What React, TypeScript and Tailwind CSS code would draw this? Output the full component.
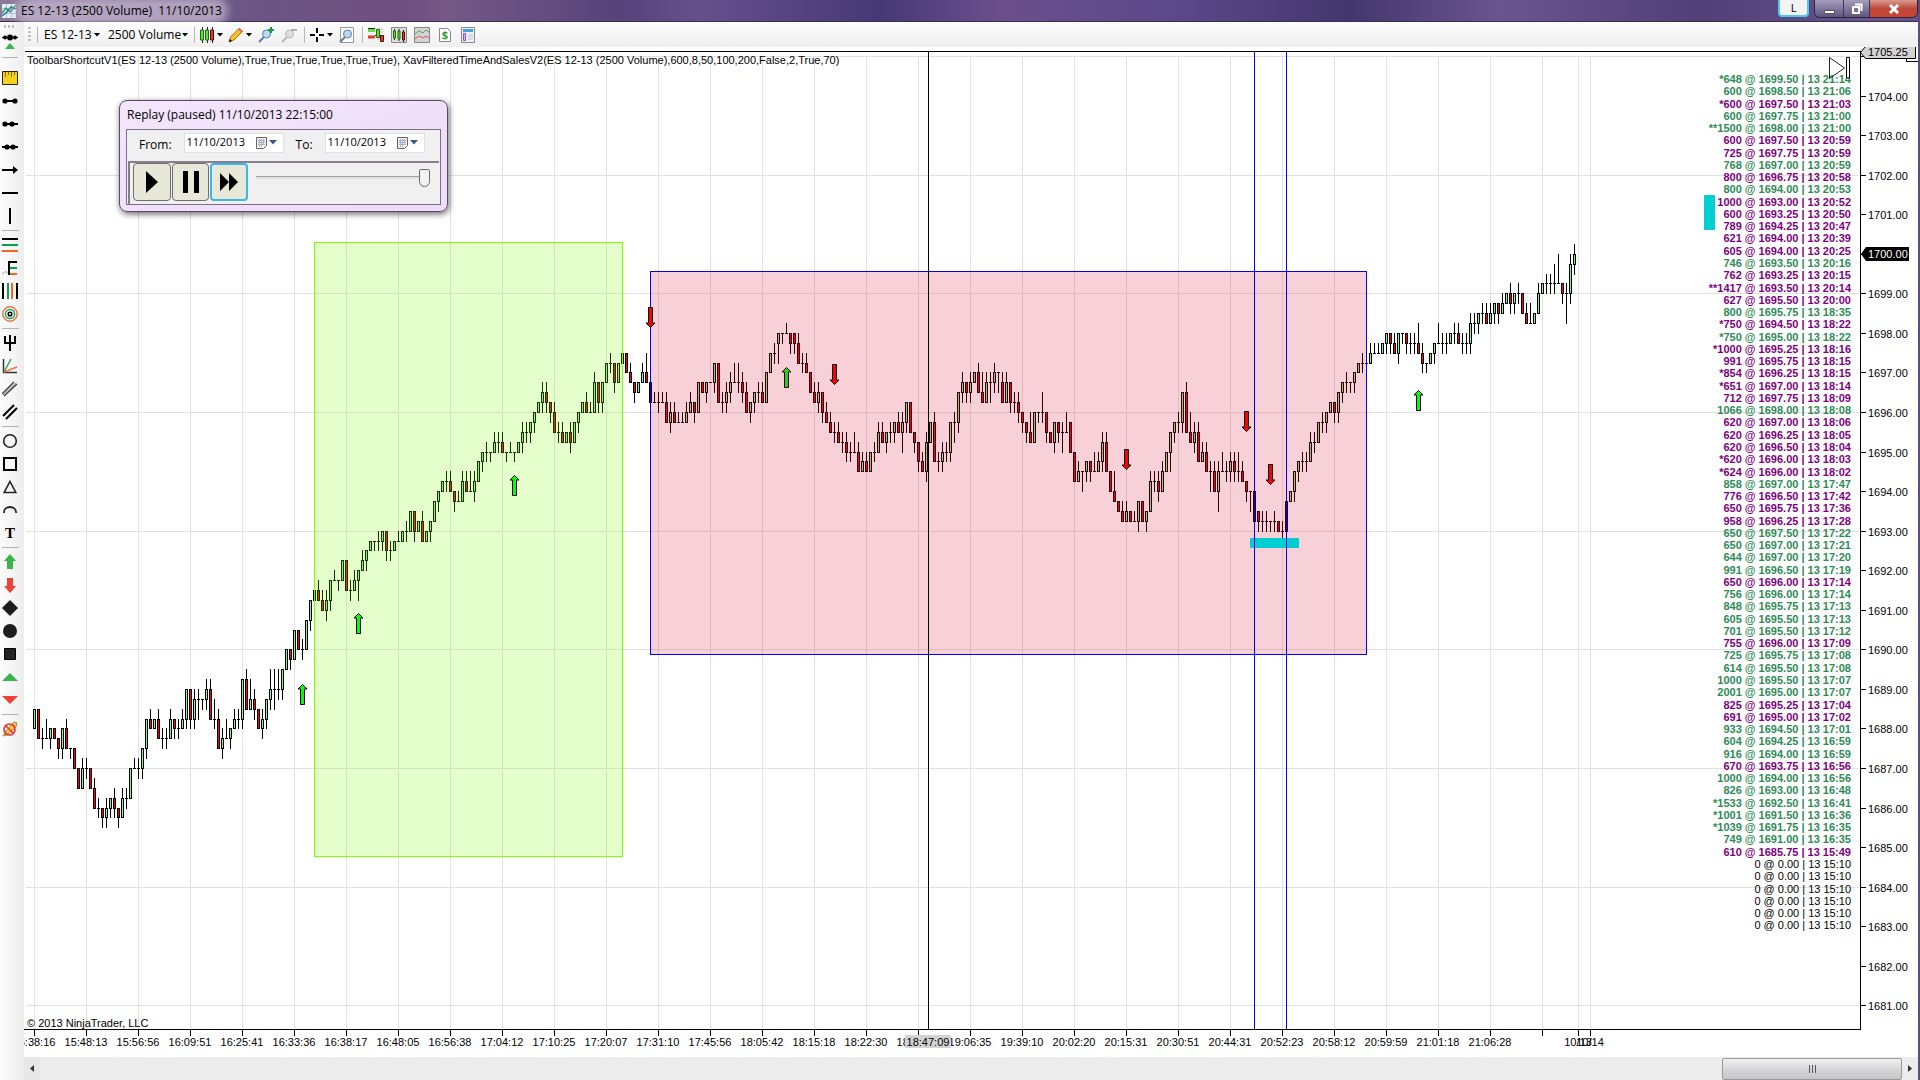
import React from "react";

// open, high, low, close in ticks (1 tick = 0.25) above 1680.00
const candles: number[][] = [
  [32,34,32,34],[34,34,31,31],[31,32,30,31],[31,33,31,31],[31,32,30,32],[32,32,31,31],[31,31,29,30],[30,32,29,32],[32,33,30,30],[30,30,29,30],
  [30,30,28,28],[28,28,26,26],[26,29,26,28],[28,29,27,28],[28,28,26,26],[26,27,24,24],[24,25,23,24],[24,24,22,23],[23,25,22,24],[24,25,23,25],
  [25,26,23,24],[24,24,22,23],[23,26,23,25],[25,26,24,25],[25,28,25,28],[28,29,28,28],[28,29,27,28],[28,30,27,30],[30,33,29,33],[33,34,32,32],
  [32,33,32,33],[33,34,31,31],[31,32,30,31],[31,32,30,31],[31,34,31,33],[33,33,31,32],[32,33,31,32],[32,34,32,33],[33,36,32,36],[36,36,32,33],
  [33,36,32,35],[35,36,33,35],[35,35,34,35],[35,37,34,36],[36,37,33,33],[33,35,32,33],[33,34,30,30],[30,32,29,31],[31,33,31,31],[31,32,30,32],
  [32,34,32,33],[33,34,32,33],[33,37,32,37],[37,38,34,34],[34,37,34,35],[35,36,33,34],[34,34,32,32],[32,34,31,33],[33,35,32,35],[35,38,34,36],
  [36,38,34,36],[36,38,35,36],[36,38,35,38],[38,40,38,40],[40,40,38,39],[39,42,39,42],[42,42,40,40],[40,41,39,40],[40,43,40,43],[43,45,42,45],
  [45,46,45,46],[46,47,45,45],[45,46,44,44],[44,46,43,45],[45,47,44,47],[47,48,47,47],[47,47,46,47],[47,49,47,49],[49,49,46,46],[46,47,45,46],
  [46,48,46,47],[47,48,45,48],[48,50,48,49],[49,50,48,50],[50,51,50,51],[51,51,50,51],[51,52,50,51],[51,52,50,52],[52,52,49,50],[50,51,49,50],
  [50,51,50,51],[51,52,51,51],[51,52,51,52],[52,53,51,52],[52,54,52,54],[54,54,51,52],[52,53,52,53],[53,54,51,51],[51,52,51,52],[52,53,51,53],
  [53,55,53,55],[55,56,54,56],[56,57,56,57],[57,58,56,57],[57,58,56,56],[56,56,54,55],[55,56,55,55],[55,58,55,57],[57,58,56,56],[56,58,56,56],
  [56,58,55,57],[57,59,57,59],[59,60,58,60],[60,61,59,60],[60,60,59,60],[60,62,60,61],[61,62,60,61],[61,62,60,60],[60,60,59,60],[60,61,60,60],
  [60,60,59,60],[60,61,60,61],[61,63,60,62],[62,63,61,62],[62,63,61,63],[63,64,62,64],[64,65,64,65],[65,67,64,66],[66,67,64,65],[65,65,63,64],
  [64,65,62,62],[62,63,61,62],[62,63,61,61],[61,62,61,62],[62,63,60,61],[61,63,61,63],[63,64,62,64],[64,65,64,65],[65,66,64,64],[64,65,64,64],
  [64,68,64,67],[67,67,64,65],[65,67,64,67],[67,69,67,69],[69,70,68,69],[69,69,66,67],[67,69,67,69],[69,71,68,70],[70,70,68,68],[68,69,67,67],
  [67,67,65,66],[66,67,66,67],[67,69,67,68],[68,70,67,67],[67,67,65,65],[65,66,65,65],[65,66,64,65],[65,66,65,65],[65,66,63,63],[63,65,62,64],
  [64,65,63,63],[63,64,63,63],[63,64,63,63],[63,65,63,64],[64,66,64,65],[65,65,63,64],[64,67,64,67],[67,67,66,66],[66,67,65,67],[67,67,67,67],
  [67,69,66,69],[69,69,65,65],[65,66,64,65],[65,67,64,66],[66,68,65,67],[67,69,67,67],[67,69,66,67],[67,68,65,66],[66,67,64,64],[64,65,63,65],
  [65,66,64,66],[66,67,65,66],[66,67,65,65],[65,68,65,68],[68,70,68,70],[70,71,69,70],[71,72,69,72],[72,72,71,72],[72,73,72,72],[72,72,70,71],
  [72,72,70,71],[71,72,69,69],[69,70,68,69],[69,70,68,68],[68,68,66,66],[66,67,65,65],[65,67,64,66],[66,66,63,64],[64,65,63,63],[63,64,62,62],
  [62,63,61,62],[62,63,61,61],[61,62,60,61],[61,62,59,60],[60,61,59,60],[60,62,60,60],[60,61,58,58],[58,60,58,59],[59,60,58,58],[58,60,58,60],
  [60,61,59,60],[60,63,60,62],[62,63,61,61],[61,62,60,62],[62,63,61,62],[62,63,61,63],[63,64,62,62],[62,64,60,63],[63,65,62,65],[65,65,62,62],
  [62,62,60,61],[61,61,58,59],[59,60,58,58],[58,62,57,61],[61,63,61,63],[63,64,59,59],[59,60,58,59],[59,61,58,60],[60,61,59,60],[60,63,59,63],
  [63,64,61,63],[63,66,62,66],[66,68,65,67],[67,67,65,66],[66,68,65,67],[67,68,67,68],[68,69,66,66],[66,68,65,65],[65,68,65,67],[67,68,65,67],
  [67,69,66,68],[68,68,66,68],[67,68,65,65],[65,68,65,67],[67,67,64,65],[65,66,64,65],[65,66,63,64],[64,64,62,63],[63,63,61,62],[62,64,61,61],
  [61,64,61,64],[64,64,63,64],[64,66,63,64],[64,64,61,62],[62,62,61,61],[61,63,60,63],[63,63,61,62],[62,63,60,62],[62,64,62,62],[63,63,60,60],
  [60,60,57,57],[57,59,57,58],[58,58,56,58],[58,59,57,59],[59,59,57,58],[58,60,58,58],[58,60,58,59],[59,62,58,61],[61,62,58,58],[58,58,56,56],
  [56,58,55,55],[55,55,54,54],[54,55,53,53],[53,55,53,54],[54,54,53,53],[53,54,53,53],[53,55,52,55],[55,55,53,53],[53,54,52,54],[54,58,54,57],
  [57,58,56,57],[57,58,55,56],[56,59,56,58],[58,60,58,60],[60,62,58,62],[62,63,61,63],[63,64,62,63],[63,66,62,66],[66,67,62,62],[62,64,61,61],
  [61,63,60,62],[62,63,59,59],[59,61,59,60],[60,61,58,58],[58,59,56,58],[58,59,56,56],[56,59,54,58],[58,60,58,58],[58,59,57,58],[58,60,57,59],
  [59,60,57,58],[58,60,57,58],[58,59,57,57],[57,57,55,56],[56,56,54,56],[56,56,53,53],[54,54,52,53],[53,54,52,53],[53,54,52,53],[53,53,52,53],
  [53,54,52,53],[53,53,52,52],[52,53,51,52],[52,55,52,55],[55,56,55,56],[56,58,55,58],[58,59,57,59],[59,60,58,59],[59,60,58,59],[59,62,59,61],
  [61,62,60,61],[61,63,61,63],[63,64,62,63],[63,64,62,64],[64,65,64,65],[65,65,63,64],[64,66,63,66],[66,67,65,67],[67,68,66,67],[67,67,66,67],
  [67,68,66,68],[68,69,68,69],[69,70,68,69],[69,69,69,69],[69,71,69,70],[70,71,70,70],[70,71,70,70],[70,71,70,71],[71,72,70,72],[72,72,70,71],
  [71,72,70,70],[70,72,69,72],[72,72,71,72],[72,72,70,71],[71,72,70,71],[71,72,70,71],[71,73,70,70],[70,71,68,69],[69,69,68,69],[69,70,69,70],
  [70,71,69,71],[71,73,71,71],[71,72,70,71],[71,72,70,71],[71,72,71,72],[72,73,71,72],[72,73,71,71],[71,72,70,71],[71,72,70,71],[71,74,70,73],
  [73,74,72,73],[73,74,72,74],[74,75,73,74],[74,75,73,73],[73,75,73,74],[74,75,73,75],[75,75,73,74],[74,76,74,75],[75,76,75,76],[76,77,74,75],
  [75,76,74,76],[76,77,75,76],[76,76,74,74],[74,75,73,73],[73,75,73,73],[73,74,73,74],[74,77,74,76],[76,77,76,77],[77,78,76,77],[77,78,76,77],
  [77,79,76,77],[77,80,77,77],[77,77,75,76],[76,77,73,76],[76,80,75,79],[79,81,78,80],
];

const timeLabels = [
  "15:38:16", "15:48:13", "15:56:56", "16:09:51", "16:25:41", "16:33:36", "16:38:17", "16:48:05", "16:56:38", "17:04:12",
  "17:10:25", "17:20:07", "17:31:10", "17:45:56", "18:05:42", "18:15:18", "18:22:30", "18:36:42", "19:06:35", "19:39:10",
  "20:02:20", "20:15:31", "20:30:51", "20:44:31", "20:52:23", "20:58:12", "20:59:59", "21:01:18", "21:06:28", "",
];

// b = traded at the ask (green), s = traded at the bid (purple), n = empty row
const trades = `b*648 @ 1699.50 | 13 21:14
b600 @ 1698.50 | 13 21:06
s*600 @ 1697.50 | 13 21:03
b600 @ 1697.75 | 13 21:00
b**1500 @ 1698.00 | 13 21:00
s600 @ 1697.50 | 13 20:59
s725 @ 1697.75 | 13 20:59
b768 @ 1697.00 | 13 20:59
s800 @ 1696.75 | 13 20:58
b800 @ 1694.00 | 13 20:53
s1000 @ 1693.00 | 13 20:52
s600 @ 1693.25 | 13 20:50
s789 @ 1694.25 | 13 20:47
s621 @ 1694.00 | 13 20:39
s605 @ 1694.00 | 13 20:25
b746 @ 1693.50 | 13 20:16
s762 @ 1693.25 | 13 20:15
s**1417 @ 1693.50 | 13 20:14
s627 @ 1695.50 | 13 20:00
b800 @ 1695.75 | 13 18:35
s*750 @ 1694.50 | 13 18:22
b*750 @ 1695.00 | 13 18:22
s*1000 @ 1695.25 | 13 18:16
s991 @ 1695.75 | 13 18:15
s*854 @ 1696.25 | 13 18:15
s*651 @ 1697.00 | 13 18:14
s712 @ 1697.75 | 13 18:09
b1066 @ 1698.00 | 13 18:08
s620 @ 1697.00 | 13 18:06
s620 @ 1696.25 | 13 18:05
s620 @ 1696.50 | 13 18:04
s*620 @ 1696.00 | 13 18:03
s*624 @ 1696.00 | 13 18:02
b858 @ 1697.00 | 13 17:47
s776 @ 1696.50 | 13 17:42
s650 @ 1695.75 | 13 17:36
s958 @ 1696.25 | 13 17:28
b650 @ 1697.50 | 13 17:22
b650 @ 1697.00 | 13 17:21
b644 @ 1697.00 | 13 17:20
b991 @ 1696.50 | 13 17:19
s650 @ 1696.00 | 13 17:14
b756 @ 1696.00 | 13 17:14
b848 @ 1695.75 | 13 17:13
b605 @ 1695.50 | 13 17:13
b701 @ 1695.50 | 13 17:12
s755 @ 1696.00 | 13 17:09
b725 @ 1695.75 | 13 17:08
b614 @ 1695.50 | 13 17:08
b1000 @ 1695.50 | 13 17:07
b2001 @ 1695.00 | 13 17:07
s825 @ 1695.25 | 13 17:04
s691 @ 1695.00 | 13 17:02
b933 @ 1694.50 | 13 17:01
b604 @ 1694.25 | 13 16:59
b916 @ 1694.00 | 13 16:59
s670 @ 1693.75 | 13 16:56
b1000 @ 1694.00 | 13 16:56
b826 @ 1693.00 | 13 16:48
b*1533 @ 1692.50 | 13 16:41
b*1001 @ 1691.50 | 13 16:36
b*1039 @ 1691.75 | 13 16:35
b749 @ 1691.00 | 13 16:35
s610 @ 1685.75 | 13 15:49
n0 @ 0.00 | 13 15:10
n0 @ 0.00 | 13 15:10
n0 @ 0.00 | 13 15:10
n0 @ 0.00 | 13 15:10
n0 @ 0.00 | 13 15:10
n0 @ 0.00 | 13 15:10`.split("\n");

const tradeStyles: Record<string, string> = {
  b: "font-bold text-[#2e8b57]",
  s: "font-bold text-[#800080]",
  n: "text-black",
};

const barX = (i: number) => 10 + i * 4;
const tickY = (t: number) => Math.round(365 - (t - 64) * 9.89);

const Candle = ({ i, bar }: { i: number; bar: number[] }) => {
  const [open, high, low, close] = bar;
  const x = barX(i);
  const top = tickY(Math.max(open, close));
  const bottom = tickY(Math.min(open, close));
  return (
    <g>
      <rect x={x} y={tickY(high)} width={1} height={tickY(low) - tickY(high) + 1} />
      <rect x={x - 1} y={top} width={3} height={bottom - top + 1} />
      {open !== close && (
        <rect x={x} y={top + 1} width={1} height={bottom - top - 1} fill={close > open ? "#90ee90" : "#ff0000"} />
      )}
    </g>
  );
};

const Arrow = ({ x, y, up = false }: { x: number; y: number; up?: boolean }) => (
  <path
    transform={`translate(${x} ${y})`}
    d={up ? "M.5 .5l4.5 4.5h-2.5v15.5h-4v-15.5h-2.5z" : "M.5 20.5l4.5-4.5h-2.5v-15.5h-4v15.5h-2.5z"}
    fill={up ? "#00ff00" : "#ff0000"}
    stroke="#000"
  />
);

const Plot = () => (
  <svg className="block h-full w-full" role="img" aria-label="ES 12-13 price chart">
    <g fill="#e1e1e1" shapeRendering="crispEdges">
      {timeLabels.map((_, i) => (
        <rect key={i} x={10 + i * 52} y={8} width={1} height="100%" />
      ))}
      <rect x={1554} y={8} width={1} height="100%" />
      <rect x={1566} y={8} width={1} height="100%" />
      {[100, 88, 76, 64, 52, 40, 28, 16, 4].map((t) => (
        <rect key={t} x={2} y={tickY(t)} width="100%" height={1} />
      ))}
    </g>
    <g shapeRendering="crispEdges">
      {candles.map((bar, i) => (
        <Candle key={i} i={i} bar={bar} />
      ))}
    </g>
    <Arrow up x={762} y={320} />

    {/* marked regions */}
    <rect x={290.5} y={195.5} width={308} height={614} fill="#7fff00" fillOpacity={0.2} stroke="#7fff00" />
    <rect x={626.5} y={224.5} width={716} height={383} fill="#dc143c" fillOpacity={0.2} stroke="#0000ff" />
    <rect x={1226} y={491} width={49} height={10} rx={1} fill="#00ced1" />
    <rect x={1680} y={148} width={11} height={35} rx={1} fill="#00ced1" />

    <Arrow up x={278} y={637} />
    <Arrow up x={334} y={566} />
    <Arrow up x={490} y={428} />
    <Arrow up x={1394} y={343} />
    <Arrow x={626} y={260} />
    <Arrow x={810} y={317} />
    <Arrow x={1102} y={402} />
    <Arrow x={1222} y={364} />
    <Arrow x={1246} y={417} />

    <g shapeRendering="crispEdges">
      <rect x={1230} y={4} width={1} height="100%" fill="#0000ff" />
      <rect x={1262} y={4} width={1} height="100%" fill="#0000ff" />
      <rect x={904} y={4} width={1} height="100%" />
      <rect x={1} y={4} width="100%" height={1} />
    </g>
  </svg>
);

const PriceAxis = () => (
  <svg className="block h-full w-full text-[11px]">
    <rect x={0} y={4} width={1} height="100%" />
    {Array.from({ length: 24 }, (_, k) => 1704 - k).map((price) => {
      const y = tickY((price - 1680) * 4);
      return (
        <g key={price}>
          <rect x={0} y={y} width={6} height={1} />
          {price !== 1700 && (
            <text x={8} y={y + 5}>
              {price}.00
            </text>
          )}
        </g>
      );
    })}
    <rect x={0} y={9} width={6} height={1} />
    <path d="M46.500 14v-2M46 14.500h12" stroke="#000" />
    <path d="M.5 5.500l5-6h50v12h-50z" fill="#d3d3d3" stroke="#000" />
    <text x={8} y={9}>1705.25</text>
    <path d="M1 207l5-7h43v14h-43z" />
    <text x={8} y={211} fill="#fff">1700.00</text>
  </svg>
);

const Line = ({ d, color = "#000", w = 2 }: { d: string; color?: string; w?: number }) => (
  <path d={d} fill="none" stroke={color} strokeWidth={w} />
);

const drawingTools: ([string, React.ReactNode] | null)[] = [
  ["Ruler", <><path d="M.5 1.500h15v13h-15z" fill="#f2d21b" stroke="#2b2600" /><path d="M3.500 2v5M6.500 2v3M9.500 2v5M12.500 2v3" stroke="#8a6d00" /></>],
  ["Line", <><Line d="M2 8h12" /><circle cx="3" cy="8" r="2.600" /><circle cx="13" cy="8" r="2.600" /></>],
  ["Ray", <><Line d="M2 8h14" /><circle cx="3" cy="8" r="2.600" /><circle cx="10" cy="8" r="2.600" /></>],
  ["Extended line", <><Line d="M0 8h16" /><circle cx="5" cy="8" r="2.600" /><circle cx="11" cy="8" r="2.600" /></>],
  ["Arrow line", <><Line d="M0 8h14" /><path d="M11 4l5 4-5 4z" /></>],
  ["Horizontal line", <Line d="M0 8h16" />],
  ["Vertical line", <Line d="M8 0v16" />],
  null,
  ["Fibonacci retracements", <><Line d="M0 2h16" /><Line d="M0 8h16" color="#00a651" /><Line d="M0 14h16" color="#f26522" /></>],
  ["Fibonacci extensions", <><Line d="M15 2H7v13" /><Line d="M8 8h7" color="#00a651" /><Line d="M8 14h7" color="#f26522" /><path d="M.5 14l3-3 2.500 3" fill="none" stroke="#555" strokeDasharray="1 1" /></>],
  ["Fibonacci time", <><Line d="M1 0v16" /><Line d="M6 0v16" color="#00a651" /><Line d="M10 0v16" color="#f26522" /><Line d="M15 0v16" /></>],
  ["Fibonacci circle", <g fill="none" strokeWidth="1.500"><circle cx="8" cy="8" r="7.200" stroke="#ee7444" /><circle cx="8" cy="8" r="4.600" stroke="#22a85e" /><circle cx="8" cy="8" r="1.800" stroke="#000" /></g>],
  null,
  ["Pitchfork", <Line d="M3 1v7h10V1M8 0v16" />],
  ["Gann fan", <><Line d="M1.500 1v13.500H15" w={1.5} color="#333" /><Line d="M2 14L9 1" w={1.5} color="#22a85e" /><Line d="M2 14l13-5" w={1.5} color="#ee7444" /></>],
  ["Regression channel", <><Line d="M0 13L12 1M2 15L15 3" w={1.5} color="#444" /><Line d="M1 14L14 2" w={1} color="#999" /></>],
  ["Trend channel", <Line d="M1 12L12 1M4 15L15 4" />],
  null,
  ["Ellipse", <circle cx="8" cy="8" r="6.300" fill="none" stroke="#222" strokeWidth="1.600" />],
  ["Rectangle", <path d="M2 2h12v12H2z" fill="none" stroke="#000" strokeWidth="2" />],
  ["Triangle", <path d="M8 2.500L13.800 13.500H2.200z" fill="none" stroke="#222" strokeWidth="1.600" />],
  ["Arc", <path d="M1.800 11C2 3 14 3 14.200 11" fill="none" stroke="#222" strokeWidth="1.800" />],
  ["Text", <text x="8" y="13" textAnchor="middle" fontSize="15" className="font-['Liberation_Serif',serif] font-bold">T</text>],
  null,
  ["Arrow up", <path d="M8 0l6 7h-3v8H5V7H2z" fill="#39b54a" />],
  ["Arrow down", <path d="M8 16l6-7h-3V1H5v8H2z" fill="#ef4136" />],
  ["Diamond", <path d="M8 0l8 8-8 8-8-8z" fill="#1c1c1c" />],
  ["Dot", <circle cx="8" cy="8" r="7" fill="#1c1c1c" />],
  ["Square", <path d="M2.500 2.500h11v11h-11z" fill="#222" stroke="#000" />],
  ["Triangle up", <path d="M8 4l8 8H0z" fill="#39b54a" />],
  ["Triangle down", <path d="M8 12l8-8H0z" fill="#ef4136" />],
  null,
  ["Remove drawings", <><path d="M1 15l3-5 8-9 3 1-1 4-9 8z" fill="#f6c83c" stroke="#9a8a6a" /><circle cx="7.500" cy="8.500" r="5.500" fill="none" stroke="#e8332a" strokeWidth="1.600" /><path d="M4 5l7 7" stroke="#e8332a" strokeWidth="1.600" /></>],
];

const DrawingToolbar = () => (
  <aside className="flex w-6 shrink-0 flex-col bg-linear-to-r from-[#fdfdfd] to-[#ededed]">
    <div className="flex h-11 w-5 flex-col items-center">
      <svg width="16" height="36" viewBox="0 0 16 36">
        <path d="M2 4.500h12" stroke="#aaa" strokeWidth="2" strokeDasharray="2 2" />
        <path d="M0 15.500h16" stroke="#000" />
        <circle cx="3" cy="15.500" r="2" />
        <circle cx="8" cy="15.500" r="3" />
        <circle cx="13" cy="15.500" r="2" />
        <path d="M8 21l5 6H3z" fill="#39b54a" />
        <path d="M0 35.500h16" stroke="#b5b5b5" />
      </svg>
    </div>
    {drawingTools.map((tool, i) =>
      tool ? (
        <button key={i} aria-label={tool[0]} className="flex h-[23px] w-5 items-center justify-center">
          <svg width="16" height="16" viewBox="0 0 16 16">{tool[1]}</svg>
        </button>
      ) : (
        <div key={i} className="flex h-1.5 items-center pl-0.5">
          <div className="h-px w-[17px] bg-[#b5b5b5]" />
        </div>
      )
    )}
  </aside>
);

const Caret = () => (
  <svg width="6" height="4" viewBox="0 0 6 4" className="shrink-0">
    <path d="M0 0h6L3 3.500z" />
  </svg>
);

const Separator = () => <div className="mr-px ml-1 h-4 w-px bg-[#b8b8b8]" />;

const ToolButton = ({ label, menu = false, children }: { label: string; menu?: boolean; children: React.ReactNode }) => (
  <button
    aria-label={label}
    className={menu ? "flex h-5 w-[29px] items-center gap-0.5 pl-[3px]" : "flex h-5 w-[23px] items-center justify-center"}
  >
    <svg width="16" height="16" viewBox="0 0 16 16" className="shrink-0">{children}</svg>
    {menu && <Caret />}
  </button>
);

const Lens = ({ color = "#5a7fa8", fill = "#bcd9f0" }: { color?: string; fill?: string }) => (
  <>
    <path d="M6 10l-5 5" stroke={color} strokeWidth="2" />
    <circle cx="8.500" cy="7" r="4" fill={fill} stroke={color} />
  </>
);

const ChartToolbar = () => (
  <div className="flex h-[25px] items-center bg-linear-to-b from-[#fdfdfd] to-[#efefef] pl-1 font-['Open_Sans','Noto_Sans',sans-serif] text-xs">
    <svg width="3" height="16" viewBox="0 0 3 16">
      <path d="M1.500 0v16" stroke="#aaa" strokeWidth="2" strokeDasharray="2 2" />
    </svg>
    <div className="mr-1.5 ml-1.5 h-4 w-px bg-[#b8b8b8]" />
    <label className="flex items-center">
      <select aria-label="Instrument" className="w-[50px] appearance-none">
        <option>ES 12-13</option>
      </select>
      <Caret />
    </label>
    <label className="ml-2 flex items-center">
      <select aria-label="Interval" className="w-[74px] appearance-none">
        <option>2500 Volume</option>
      </select>
      <Caret />
    </label>
    <div className="mr-px ml-1.5 h-4 w-px bg-[#b8b8b8]" />
    <ToolButton label="Chart style" menu>
      <path d="M3.500 0v16M8.500 0v16M13.500 0v16" stroke="#222" />
      <path d="M1.500 3h3v10h-3z" fill="#5fe03a" stroke="#1d6b0c" />
      <path d="M6.500 3h3v10h-3z" fill="#5fe03a" stroke="#1d6b0c" />
      <path d="M11.500 3h3v10h-3z" fill="#e23a2e" stroke="#5a0d08" />
    </ToolButton>
    <ToolButton label="Drawing tools" menu>
      <path d="M1 15l1.500-5L11 1.500l3.500 3L6 13z" fill="#f6c12a" stroke="#a5761a" />
      <path d="M10 2.500l1.500-1.500 3.500 3-1.500 1.800z" fill="#e4655a" />
      <path d="M1 15l1-3 2 2z" />
    </ToolButton>
    <ToolButton label="Zoom in">
      <Lens />
      <path d="M13 0v6M10 3h6" stroke="#14a03a" strokeWidth="2" />
    </ToolButton>
    <ToolButton label="Zoom out">
      <Lens color="#b9b9b9" fill="#dedede" />
      <path d="M10 3h6" stroke="#b0b0b0" strokeWidth="2" />
    </ToolButton>
    <Separator />
    <ToolButton label="Crosshair" menu>
      <path d="M8 1v5M8 10v5M1 8h5M10 8h5" stroke="#000" strokeWidth="2" />
    </ToolButton>
    <ToolButton label="Data box">
      <path d="M1.500 .5h13v15h-13z" fill="#fff" stroke="#999" />
      <Lens />
    </ToolButton>
    <Separator />
    <ToolButton label="Chart trader">
      <path d="M9 2h6M9 5h6M9 12h6" stroke="#bbb" />
      <path d="M0 1.500h7M7 8.500h7" stroke="#222" />
      <path d="M0 3.500h7" stroke="#5fe03a" strokeWidth="3" />
      <path d="M0 10h7" stroke="#e23a2e" strokeWidth="3" />
      <path d="M8.500 2.500h3v8h-3z" fill="#5fe03a" stroke="#1d6b0c" />
      <path d="M12.500 8.500h3v6h-3z" fill="#e23a2e" stroke="#5a0d08" />
    </ToolButton>
    <ToolButton label="Data series">
      <path d="M.5 .5h15v15H.5z" fill="#ddd" stroke="#888" />
      <path d="M3.500 2v11M8 2v12M12.500 3v12" stroke="#222" />
      <path d="M2.500 4h2v7h-2zM7 4h2v8H7z" fill="#5fe03a" stroke="#1d6b0c" />
      <path d="M11.500 5h2v8h-2z" fill="#e23a2e" stroke="#5a0d08" />
    </ToolButton>
    <ToolButton label="Indicators">
      <path d="M.5 .5h15v15H.5z" fill="#d4d4d4" stroke="#888" />
      <path d="M1 7l4-3 4 2 3-3 3 2" fill="none" stroke="#3fae62" />
      <path d="M1 12l4-3 4 2 3-2 3 2" fill="none" stroke="#d9534f" />
    </ToolButton>
    <ToolButton label="Strategies">
      <path d="M2.500 1.500h8l3 3v10h-11z" fill="#fff" stroke="#888" />
      <text x="8" y="12" textAnchor="middle" fontSize="11" fontWeight="bold" fill="#2f9a2f">$</text>
    </ToolButton>
    <ToolButton label="Properties">
      <path d="M1.500 .5h13v15h-13z" fill="#eef0f8" stroke="#888" />
      <path d="M3 3.500h10" stroke="#3ea2dc" strokeWidth="3" />
      <path d="M3.500 6.500h2v7h-2z" fill="#d7b8ff" stroke="#8a4df0" />
      <path d="M8 8h5M8 10h5M8 12h5" stroke="#c3c9dd" />
    </ToolButton>
  </div>
);

const DateField = ({ id, label }: { id: string; label: string }) => (
  <>
    <label htmlFor={id} className="pt-1">
      {label}
    </label>
    <div className="flex h-5 w-[100px] items-center border border-[#dde0e8] bg-white">
      <input id={id} defaultValue="11/10/2013" className="w-[71px] pl-0.5 text-[11px] outline-none" />
      <button aria-label={`Pick ${id} date`} className="flex items-center gap-0.5">
        <svg width="11" height="12" viewBox="0 0 11 12">
          <path d="M.5 .5h10v8l-3 3h-7z" fill="#f4f2f2" stroke="#6b6064" />
          <path d="M2 3.500h7M2 5.500h7M2 7.500h7M3.500 2v8M5.500 2v8M7.500 2v6" stroke="#a8b4c4" />
        </svg>
        <svg width="8" height="5" viewBox="0 0 8 5">
          <path d="M0 0h8L4 4.500z" fill="#3c5a80" />
        </svg>
      </button>
    </div>
  </>
);

const ReplayDialog = () => (
  <section className="absolute top-[53px] left-[95px] h-[112px] w-[329px] rounded-lg border border-[#5a4a66] bg-linear-to-br from-[#f3e6fb] to-[#eddcf9] px-1.5 font-['Open_Sans','Noto_Sans',sans-serif] text-xs shadow-[1px_2px_6px_rgba(0,0,0,0.6)]">
    <h2 className="h-7 pt-1.5 pl-px">Replay (paused) 11/10/2013 22:15:00</h2>
    <div className="border border-[#7a6f84] bg-[#f0f0f0]">
      <div className="flex h-[31px] items-center gap-3 pb-1.5 pl-3">
        <div className="flex items-center gap-3">
          <DateField id="from" label="From:" />
        </div>
        <div className="flex items-center gap-3">
          <DateField id="to" label="To:" />
        </div>
      </div>
      <div className="mx-px flex h-[43px] items-center gap-px border-t-2 border-l-2 border-[#85808a] pb-1 pl-[3px]">
        <button aria-label="Play" className="flex h-[38px] w-[38px] items-center justify-center rounded-sm border border-[#6f6f6f] bg-[#e7e8d8]">
          <svg width="14" height="24" viewBox="0 0 14 24"><path d="M1 1l12 11L1 23z" /></svg>
        </button>
        <button aria-label="Pause" className="flex h-[38px] w-[37px] items-center justify-center rounded-sm border border-[#6f6f6f] bg-[#e7e8d8]">
          <svg width="16" height="22" viewBox="0 0 16 22"><path d="M0 0h5v22H0zM11 0h5v22h-5z" /></svg>
        </button>
        <button aria-label="Fast forward" className="flex h-[38px] w-[38px] items-center justify-center rounded-sm border-2 border-[#3fb4e8] bg-[#e7e8d8]">
          <svg width="18" height="18" viewBox="0 0 18 18"><path d="M0 0l9 9-9 9zM9 0l9 9-9 9z" /></svg>
        </button>
        <input
          type="range"
          aria-label="Replay speed"
          defaultValue={100}
          className="mb-2 ml-[7px] h-5 w-[174px] appearance-none bg-transparent [&::-webkit-slider-runnable-track]:h-[3px] [&::-webkit-slider-runnable-track]:border-t [&::-webkit-slider-runnable-track]:border-[#a5a5a5] [&::-webkit-slider-runnable-track]:bg-[#e0e0e0] [&::-webkit-slider-thumb]:-mt-2 [&::-webkit-slider-thumb]:h-[18px] [&::-webkit-slider-thumb]:w-[11px] [&::-webkit-slider-thumb]:appearance-none [&::-webkit-slider-thumb]:rounded-t-[2px] [&::-webkit-slider-thumb]:rounded-b-[6px] [&::-webkit-slider-thumb]:border [&::-webkit-slider-thumb]:border-[#6a6a6a] [&::-webkit-slider-thumb]:bg-[#f3f3f3]"
        />
      </div>
    </div>
  </section>
);

const TimeAndSales = () => (
  <ol className="absolute top-[26px] right-[9px] flex h-[859px] flex-col justify-between text-right text-[11px] leading-3 whitespace-pre">
    {trades.map((row, i) => (
      <li key={i} className={tradeStyles[row[0]]}>
        {row.slice(1)}
      </li>
    ))}
  </ol>
);

const TimeAxis = () => (
  <svg className="block h-[27px] w-full text-[11px]" textAnchor="middle">
    {timeLabels.map((label, i) => (
      <g key={i}>
        <rect x={10 + i * 52} y={0} width={1} height={6} />
        <text x={10 + i * 52} y={16}>{label}</text>
      </g>
    ))}
    <rect x={1554} y={0} width={1} height={6} />
    <rect x={1566} y={0} width={1} height={6} />
    <text x={1554} y={16}>10/13</text>
    <text x={1566} y={16}>10/14</text>
    <rect x={881} y={5} width={46} height={13} fill="#d3d3d3" />
    <text x={904} y={16}>18:47:09</text>
  </svg>
);

const TitleBar = () => (
  <header className="flex h-[22px] items-center border-b border-[#3a2f4c] bg-[linear-gradient(90deg,#8b7b9b_0px,#6b5786_230px,#6f4f80_400px,#745886_450px,#56437a_620px,#65508c_700px,#463876_880px,#6b4f8c_1000px,#5a4888_1180px,#43366e_1350px,#6a5590_1500px,#503f78_1700px,#65548a_1860px)] pl-0.5 font-['Open_Sans','Noto_Sans',sans-serif] text-xs">
    <svg width="14" height="14" viewBox="0 0 14 14">
      <path d="M0 0h14v14H0z" fill="#e6eef5" />
      <path d="M0 4.500h14M0 9.500h14M4.500 0v14M9.500 0v14" stroke="#b4c6d4" />
      <path d="M0 9l4-5 4 4 6-7" fill="none" stroke="#2f9e4a" strokeWidth="1.500" />
      <path d="M0 12l5-4 4-5 5 2" fill="none" stroke="#2d6fb8" strokeWidth="1.500" />
    </svg>
    <h1 className="ml-[5px] rounded-full bg-[#c9bcd3]/70 whitespace-pre shadow-[0_0_8px_6px_rgba(201,188,211,0.7)]">
      ES 12-13 (2500 Volume)  11/10/2013
    </h1>
    <div className="ml-auto flex h-full items-start">
      <button className="h-[17px] w-[31px] rounded-b-sm border-2 border-t-0 border-[#4cc8ee] bg-[#f3f3f3] text-[11px] leading-3">L</button>
      <div className="ml-[5px] flex h-[18px] overflow-hidden rounded-b-md border border-t-0 border-[#2c2340]">
        <button aria-label="Minimize" className="flex w-7 items-center justify-center bg-linear-to-b from-[#a79ebb] to-[#5f5480]">
          <svg width="11" height="12" viewBox="0 0 11 12"><path d="M.5 7.500h10v3H.5z" fill="#fff" stroke="#555" /></svg>
        </button>
        <button aria-label="Restore" className="flex w-[27px] items-center justify-center border-x border-[#40355a] bg-linear-to-b from-[#a79ebb] to-[#5f5480]">
          <svg width="12" height="12" viewBox="0 0 12 12">
            <path d="M4 1.500h6.500V8" fill="none" stroke="#fff" strokeWidth="2" />
            <path d="M2 4h6v6H2z" fill="none" stroke="#fff" strokeWidth="2" />
          </svg>
        </button>
        <button aria-label="Close" className="flex w-[47px] items-center justify-center bg-linear-to-b from-[#d79a92] via-[#c0483a] to-[#c8452f]">
          <svg width="12" height="10" viewBox="0 0 12 10"><path d="M2 1l8 8M10 1L2 9" stroke="#fff" strokeWidth="3" /></svg>
        </button>
      </div>
    </div>
  </header>
);

const ScrollBar = () => (
  <div className="flex h-[23px] items-center bg-[#ececec]">
    <button aria-label="Scroll left" className="flex h-full w-4 items-center justify-center bg-[#e7e7e7]">
      <svg width="4" height="7" viewBox="0 0 4 7"><path d="M4 0v7L0 3.500z" fill="#333" /></svg>
    </button>
    <div className="ml-auto flex h-[22px] w-[180px] items-center justify-center gap-0.5 rounded-xs border border-[#9a9a9a] bg-linear-to-b from-[#f2f2f2] via-[#d8d8da] to-[#c6c6ca]">
      <div className="h-2 w-px bg-[#555]" />
      <div className="h-2 w-px bg-[#555]" />
      <div className="h-2 w-px bg-[#555]" />
    </div>
    <button aria-label="Scroll right" className="flex h-full w-4 items-center justify-center">
      <svg width="4" height="7" viewBox="0 0 4 7"><path d="M0 0v7l4-3.500z" fill="#333" /></svg>
    </button>
  </div>
);

const App: React.FC = () => {
  return (
    <div className="flex min-h-screen w-full flex-col border-r-2 border-[#5d4c7c] bg-white font-['Liberation_Sans',Arial,sans-serif] text-black">
      <TitleBar />
      <div className="flex flex-1">
        <DrawingToolbar />
        <main className="flex min-w-0 flex-1 flex-col">
          <ChartToolbar />
          <div className="flex min-h-[900px] flex-1">
            <div className="relative min-w-0 flex-1 overflow-hidden border-b border-black">
              <div className="absolute inset-0">
                <Plot />
              </div>
              <p className="absolute top-1.5 left-[3px] text-[11px] leading-[14px] whitespace-nowrap">
                ToolbarShortcutV1(ES 12-13 (2500 Volume),True,True,True,True,True,True), XavFilteredTimeAndSalesV2(ES 12-13 (2500 Volume),600,8,50,100,200,False,2,True,70)
              </p>
              <p className="absolute bottom-0 left-[3px] text-[11px] leading-3">© 2013 NinjaTrader, LLC</p>
              <TimeAndSales />
              <button aria-label="Go to last bar" className="absolute top-2.5 right-2.5">
                <svg width="21" height="22" viewBox="0 0 21 22">
                  <path d="M.5 .5l15 10.500-15 10.500z" fill="none" stroke="#222" />
                  <path d="M17.500 .5h3v20.500h-3z" fill="#fff" stroke="#000" />
                </svg>
              </button>
              <ReplayDialog />
            </div>
            <div className="relative w-[58px] shrink-0">
              <div className="absolute inset-0">
                <PriceAxis />
              </div>
            </div>
          </div>
          <TimeAxis />
          <ScrollBar />
        </main>
      </div>
    </div>
  );
};

export default App;
